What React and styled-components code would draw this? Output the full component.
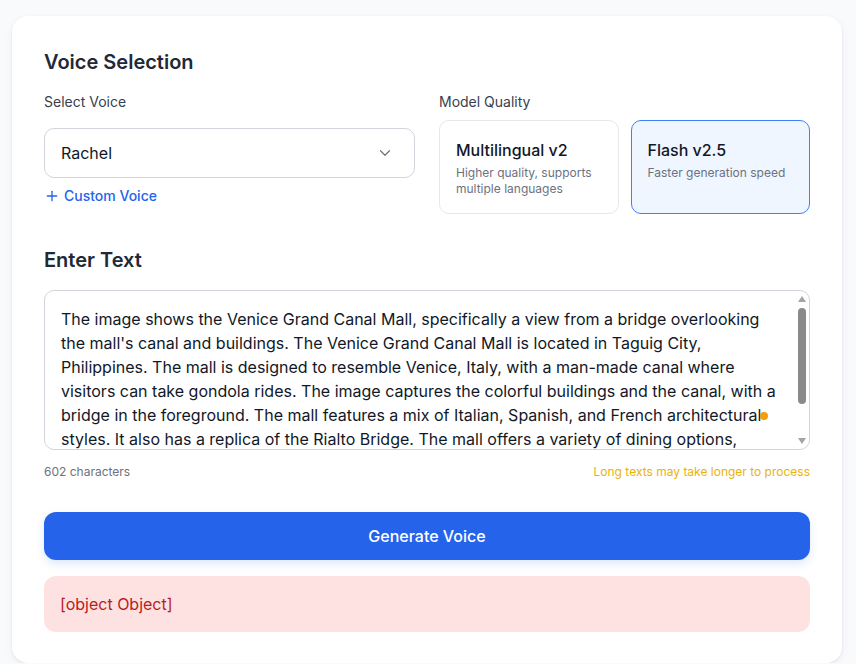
import React from "react";
import styled, { createGlobalStyle } from "styled-components";
import { ChevronDown, Plus } from "lucide-react";

const GlobalStyle = createGlobalStyle`
  * { box-sizing: border-box; }
  body {
    margin: 0;
    background: #f8fafc;
    font-family: Inter, "Noto Sans", sans-serif;
    color: #111827;
  }
`;

const TEXT =
  "The image shows the Venice Grand Canal Mall, specifically a view from a bridge overlooking the mall's canal and buildings. The Venice Grand Canal Mall is located in Taguig City, Philippines. The mall is designed to resemble Venice, Italy, with a man-made canal where visitors can take gondola rides. The image captures the colorful buildings and the canal, with a bridge in the foreground. The mall features a mix of Italian, Spanish, and French architectural styles. It also has a replica of the Rialto Bridge. The mall offers a variety of dining options, shops, and entertainment, making it a popular destination for locals and tourists.";

const App = () => {
  return (
    <Page>
      <GlobalStyle />
      <Card>
        <Heading>Voice Selection</Heading>
        <Columns>
          <Column>
            <Label>Select Voice</Label>
            <Select>
              <span>Rachel</span>
              <ChevronDown size={18} strokeWidth={1.6} color="#6b7280" />
            </Select>
            <AddLink>
              <Plus size={16} strokeWidth={2} />
              Custom Voice
            </AddLink>
          </Column>
          <Column>
            <Label>Model Quality</Label>
            <Models>
              <Model>
                <ModelName>Multilingual v2</ModelName>
                <ModelDesc>Higher quality, supports multiple languages</ModelDesc>
              </Model>
              <Model $active>
                <ModelName>Flash v2.5</ModelName>
                <ModelDesc>Faster generation speed</ModelDesc>
              </Model>
            </Models>
          </Column>
        </Columns>

        <Section>
          <Heading>Enter Text</Heading>
          <TextWrap>
            <TextArea defaultValue={TEXT} />
            <ScrollBar aria-hidden="true">
              <Arrow $dir="up" />
              <Thumb />
              <Arrow $dir="down" />
            </ScrollBar>
            <Dot />
          </TextWrap>
          <Meta>
            <span>602 characters</span>
            <Warn>Long texts may take longer to process</Warn>
          </Meta>
        </Section>

        <Generate>Generate Voice</Generate>
        <ErrorBox>[object Object]</ErrorBox>
      </Card>
    </Page>
  );
};

const Page = styled.div`
  padding: 16px 14px 0 12px;
`;

const Card = styled.div`
  background: #fff;
  border-radius: 16px;
  padding: 32px 32px 31px;
  box-shadow: 0 1px 3px rgba(15, 23, 42, 0.08), 0 4px 12px rgba(15, 23, 42, 0.04);
`;

const Heading = styled.h2`
  margin: 0 0 16px;
  font-size: 20px;
  line-height: 28px;
  font-weight: 600;
  color: #1f2937;
`;

const Columns = styled.div`
  display: grid;
  grid-template-columns: 1fr 1fr;
  gap: 24px;
`;

const Column = styled.div`
  display: flex;
  flex-direction: column;
  align-items: flex-start;
`;

const Label = styled.div`
  font-size: 14px;
  line-height: 20px;
  color: #374151;
  margin-bottom: 8px;
`;

const Select = styled.div`
  margin-top: 8px;
  width: 100%;
  height: 50px;
  border: 1px solid #d1d5db;
  border-radius: 10px;
  padding: 0 20px 0 16px;
  display: flex;
  align-items: center;
  justify-content: space-between;
  font-size: 16px;
  color: #111827;
`;

const AddLink = styled.div`
  margin-top: 8px;
  display: flex;
  align-items: center;
  gap: 4px;
  font-size: 14px;
  line-height: 20px;
  font-weight: 500;
  color: #2563eb;
`;

const Models = styled.div`
  width: 100%;
  display: grid;
  grid-template-columns: 1fr 1fr;
  gap: 12px;
`;

const Model = styled.div`
  height: 94px;
  padding: 17px 16px 16px;
  border-radius: 10px;
  border: 1px solid ${(p) => (p.$active ? "#3b82f6" : "#e5e7eb")};
  background: ${(p) => (p.$active ? "#eff6ff" : "#fff")};
`;

const ModelName = styled.div`
  font-size: 16px;
  line-height: 24px;
  font-weight: 500;
  color: #111827;
`;

const ModelDesc = styled.div`
  margin-top: 3px;
  font-size: 12px;
  line-height: 16px;
  color: #6b7280;
`;

const Section = styled.div`
  margin-top: 32px;
`;

const TextWrap = styled.div`
  position: relative;
`;

const TextArea = styled.textarea`
  display: block;
  width: 100%;
  height: 160px;
  padding: 16px 31px 16px 16px;
  border: 1px solid #d1d5db;
  border-radius: 10px;
  resize: none;
  overflow: hidden;
  font-family: Inter, "Noto Sans", sans-serif;
  font-size: 16px;
  line-height: 24px;
  color: #111827;
  outline: none;
`;

const ScrollBar = styled.div`
  position: absolute;
  top: 1px;
  right: 1px;
  bottom: 1px;
  width: 15px;
  display: flex;
  flex-direction: column;
  align-items: center;
  padding: 5px 0;
  pointer-events: none;
`;

const Arrow = styled.span`
  width: 0;
  height: 0;
  border-left: 4px solid transparent;
  border-right: 4px solid transparent;
  ${(p) =>
    p.$dir === "up"
      ? "border-bottom: 6px solid #a3a3a3;"
      : "border-top: 6px solid #a3a3a3; margin-top: auto;"}
`;

const Thumb = styled.span`
  margin-top: 6px;
  width: 8px;
  height: 96px;
  border-radius: 4px;
  background: #8a8a8a;
`;

const Dot = styled.span`
  position: absolute;
  left: 716px;
  top: 122px;
  width: 8px;
  height: 8px;
  border-radius: 50%;
  background: #f59e0b;
`;

const Meta = styled.div`
  margin-top: 14px;
  display: flex;
  justify-content: space-between;
  font-size: 12px;
  line-height: 16px;
  color: #6b7280;
`;

const Warn = styled.span`
  color: #eab308;
`;

const Generate = styled.button`
  margin-top: 32px;
  width: 100%;
  height: 48px;
  border: none;
  border-radius: 12px;
  background: #2563eb;
  color: #fff;
  font-family: Inter, "Noto Sans", sans-serif;
  font-size: 16px;
  font-weight: 500;
  box-shadow: 0 4px 8px rgba(37, 99, 235, 0.15);
`;

const ErrorBox = styled.div`
  margin-top: 16px;
  height: 56px;
  display: flex;
  align-items: center;
  padding: 0 16px;
  border-radius: 12px;
  background: #fee2e2;
  color: #b91c1c;
  font-size: 16px;
`;

export default App;
